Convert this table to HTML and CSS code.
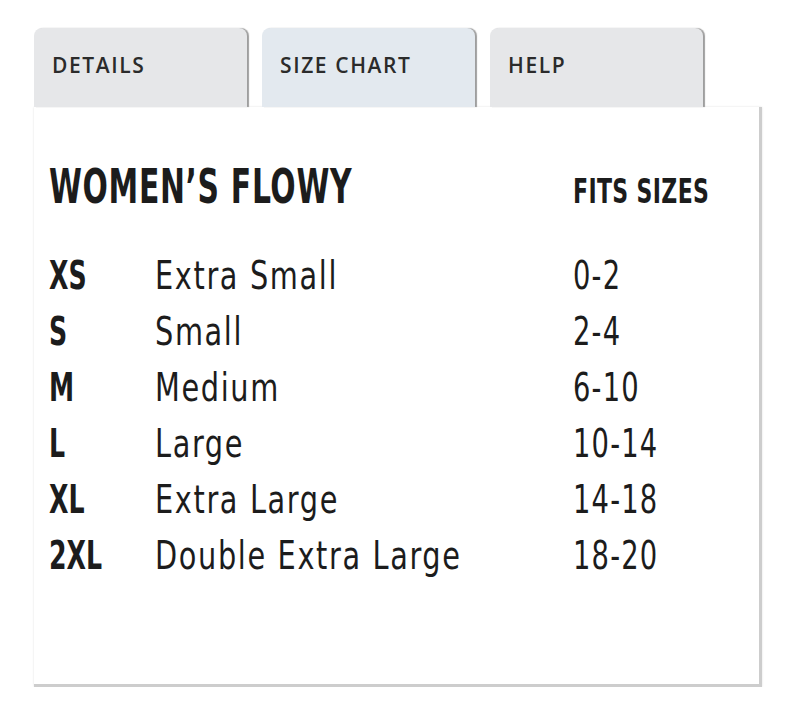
FILE: index.html
```html
<!DOCTYPE html>
<html lang="en">
<head>
<meta charset="utf-8">
<title>Size Chart</title>
<link rel="stylesheet" href="styles.css">
</head>
<body>
<div class="wrap">
  <div class="tabs">
    <div class="tab">DETAILS</div>
    <div class="tab active">SIZE CHART</div>
    <div class="tab">HELP</div>
  </div>
  <div class="panel">
    <div class="chart">
      <div class="title">WOMEN’S FLOWY</div>
      <div class="fits-head">FITS SIZES</div>

      <div class="code">XS</div><div class="name">Extra Small</div><div class="fit">0-2</div>
      <div class="code">S</div><div class="name">Small</div><div class="fit">2-4</div>
      <div class="code">M</div><div class="name">Medium</div><div class="fit">6-10</div>
      <div class="code">L</div><div class="name">Large</div><div class="fit">10-14</div>
      <div class="code">XL</div><div class="name">Extra Large</div><div class="fit">14-18</div>
      <div class="code">2XL</div><div class="name">Double Extra Large</div><div class="fit">18-20</div>
    </div>
  </div>
</div>
</body>
</html>
```

FILE: styles.css
```css
html, body {
  margin: 0;
  padding: 0;
  background: #ffffff;
}

.wrap {
  padding: 28px 0 0 34px;
  width: 728px;
}

.tabs {
  display: flex;
  gap: 15px;
}

.tab {
  width: 213px;
  height: 79px;
  box-sizing: border-box;
  padding: 22px 0 0 18px;
  background: #e6e7e9;
  border-radius: 8px 8px 0 0;
  box-shadow: 2px 0 1px rgba(0, 0, 0, 0.38);
  font-family: "Open Sans", "DejaVu Sans", sans-serif;
  font-weight: 600;
  font-size: 21px;
  line-height: 30px;
  letter-spacing: 1.6px;
  color: #2b2b2b;
}

.tab.active {
  background: #e3e9ef;
}

.panel {
  height: 580px;
  background: #ffffff;
  border-right: 3px solid #cdcdcd;
  border-bottom: 3px solid #cdcdcd;
  box-shadow: 0 0 2px rgba(0, 0, 0, 0.12);
  padding: 49px 0 0 15px;
  box-sizing: border-box;
}

.chart {
  display: grid;
  grid-template-columns: 106px 418px 1fr;
  grid-template-rows: 92px repeat(6, 56px);
  align-items: baseline;
  font-family: "DejaVu Sans Condensed", "DejaVu Sans", sans-serif;
  color: #1c1c1c;
}

.chart > div {
  transform-origin: left center;
  white-space: nowrap;
}

.title {
  grid-column: 1 / span 2;
  font-weight: 700;
  font-size: 48px;
  line-height: 60px;
  letter-spacing: 1px;
  transform: scaleX(0.69);
}

.fits-head {
  font-weight: 700;
  font-size: 34px;
  line-height: 60px;
  letter-spacing: 0.5px;
  transform: scaleX(0.72);
}

.code {
  font-weight: 700;
  font-size: 39px;
  line-height: 56px;
  transform: scaleX(0.72);
}

.name {
  font-weight: 400;
  font-size: 39px;
  line-height: 56px;
  letter-spacing: 2px;
  transform: scaleX(0.82);
}

.fit {
  font-weight: 400;
  font-size: 39px;
  line-height: 56px;
  letter-spacing: 1.5px;
  transform: scaleX(0.78);
}
```
